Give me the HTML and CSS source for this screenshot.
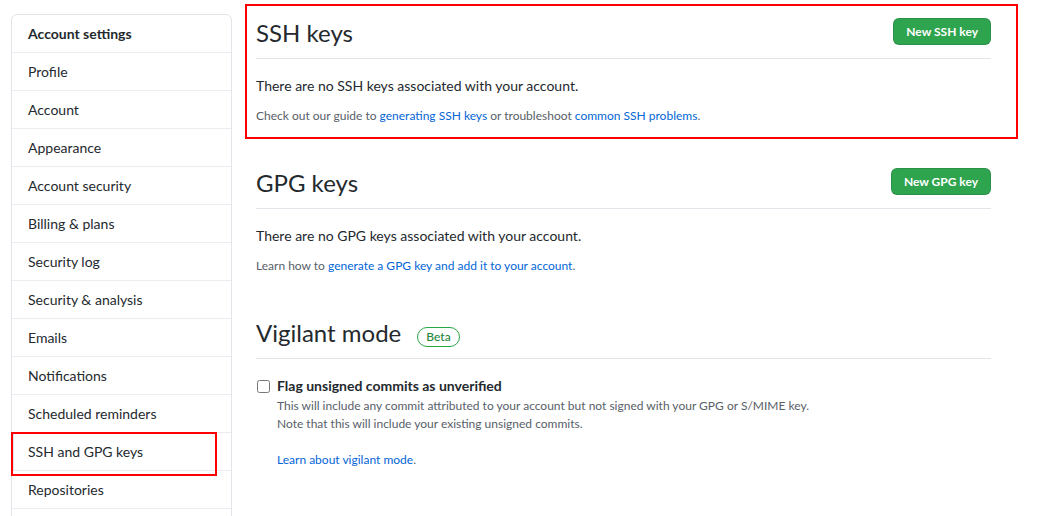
FILE: index.html
```html
<!DOCTYPE html>
<html lang="en">
<head>
<meta charset="utf-8">
<title>SSH and GPG keys</title>
<link rel="stylesheet" href="styles.css">
</head>
<body>
<div class="page">
  <nav class="sidebar">
    <div class="menu-heading">Account settings</div>
    <a class="menu-item" href="#">Profile</a>
    <a class="menu-item" href="#">Account</a>
    <a class="menu-item" href="#">Appearance</a>
    <a class="menu-item" href="#">Account security</a>
    <a class="menu-item" href="#">Billing &amp; plans</a>
    <a class="menu-item" href="#">Security log</a>
    <a class="menu-item" href="#">Security &amp; analysis</a>
    <a class="menu-item" href="#">Emails</a>
    <a class="menu-item" href="#">Notifications</a>
    <a class="menu-item" href="#">Scheduled reminders</a>
    <a class="menu-item selected" href="#">SSH and GPG keys</a>
    <a class="menu-item" href="#">Repositories</a>
    <div class="menu-rest"></div>
  </nav>

  <main class="content">
    <section class="section">
      <div class="subhead">
        <h2 class="subhead-title">SSH keys</h2>
        <a class="btn" href="#">New SSH key</a>
      </div>
      <p class="lead">There are no SSH keys associated with your account.</p>
      <p class="note">Check out our guide to <a href="#">generating SSH keys</a> or troubleshoot <a href="#">common SSH problems</a>.</p>
    </section>

    <section class="section">
      <div class="subhead">
        <h2 class="subhead-title">GPG keys</h2>
        <a class="btn" href="#">New GPG key</a>
      </div>
      <p class="lead">There are no GPG keys associated with your account.</p>
      <p class="note">Learn how to <a href="#">generate a GPG key and add it to your account</a>.</p>
    </section>

    <section class="section">
      <div class="subhead">
        <h2 class="subhead-title">Vigilant mode <span class="label">Beta</span></h2>
      </div>
      <div class="check">
        <input type="checkbox" class="check-input" id="vigilant">
        <div class="check-body">
          <label class="check-label" for="vigilant">Flag unsigned commits as unverified</label>
          <p class="check-note">This will include any commit attributed to your account but not signed with your GPG or S/MIME key.<br>Note that this will include your existing unsigned commits.<br><br><a href="#">Learn about vigilant mode</a>.</p>
        </div>
      </div>
    </section>
  </main>
</div>

<div class="annot annot-ssh"></div>
<div class="annot annot-menu"></div>
</body>
</html>
```
FILE: styles.css
```css
html, body {
  margin: 0;
  overflow: hidden;
  background: #fff;
}

body {
  font-family: Lato, "Liberation Sans", sans-serif;
  font-size: 14px;
  line-height: 1.5;
  color: #24292e;
  position: relative;
  height: 516px;
}

a {
  color: #0366d6;
  text-decoration: none;
}

.page {
  display: flex;
  align-items: flex-start;
  padding: 14px 0 0 11px;
}

/* Sidebar */
.sidebar {
  width: 221px;
  flex: none;
  border: 1px solid #e1e4e8;
  border-radius: 6px;
  display: flex;
  flex-direction: column;
  box-sizing: border-box;
}

.menu-heading {
  padding: 8px 16px;
  font-weight: 700;
  line-height: 21px;
  border-bottom: 1px solid #eaecef;
}

.menu-item {
  position: relative;
  padding: 8px 16px;
  line-height: 21px;
  color: #24292e;
  border-bottom: 1px solid #eaecef;
}

.menu-item.selected::before {
  content: "";
  position: absolute;
  left: 0;
  top: 0;
  bottom: 0;
  width: 2px;
  background: #e1e4e8;
}

.menu-rest {
  height: 40px;
}

/* Content */
.content {
  width: 735px;
  margin-left: 24px;
  padding-top: 1px;
}

.section + .section {
  margin-top: 40px;
}

.subhead {
  display: flex;
  align-items: flex-start;
  justify-content: space-between;
  padding-bottom: 7px;
  border-bottom: 1px solid #e1e4e8;
  margin-bottom: 16px;
}

.subhead-title {
  margin: 0;
  font-size: 24px;
  font-weight: 400;
  line-height: 36px;
  display: flex;
  align-items: center;
  gap: 16px;
}

.label {
  display: inline-block;
  font-size: 12px;
  font-weight: 500;
  line-height: 18px;
  padding: 0 8px;
  border: 1px solid #28a745;
  border-radius: 2em;
  color: #22863a;
  margin-top: 8px;
}

.btn {
  margin-top: 3px;
  display: inline-block;
  padding: 3px 12px;
  font-size: 12px;
  font-weight: 700;
  line-height: 19px;
  color: #fff;
  background: #2ea44f;
  border: 1px solid rgba(27, 31, 35, 0.15);
  border-radius: 6px;
}

.lead {
  margin: 0 0 11px;
  line-height: 21px;
}

.note {
  margin: 0 0 10px;
  font-size: 12px;
  line-height: 18px;
  color: #586069;
}

.check {
  display: flex;
  align-items: flex-start;
}

.check-input {
  width: 13px;
  height: 13px;
  margin: 5px 7px 0 1px;
  flex: none;
}

.check-label {
  display: block;
  font-weight: 700;
  line-height: 21px;
}

.check-note {
  margin: 1px 0 0;
  font-size: 12px;
  line-height: 18px;
  color: #586069;
}

/* Annotation boxes drawn over the screenshot */
.annot {
  position: absolute;
  border: 2px solid #f00;
  box-sizing: border-box;
  pointer-events: none;
}

.annot-ssh {
  left: 245px;
  top: 4px;
  width: 773px;
  height: 135px;
}

.annot-menu {
  left: 11px;
  top: 432px;
  width: 206px;
  height: 44px;
}
```
